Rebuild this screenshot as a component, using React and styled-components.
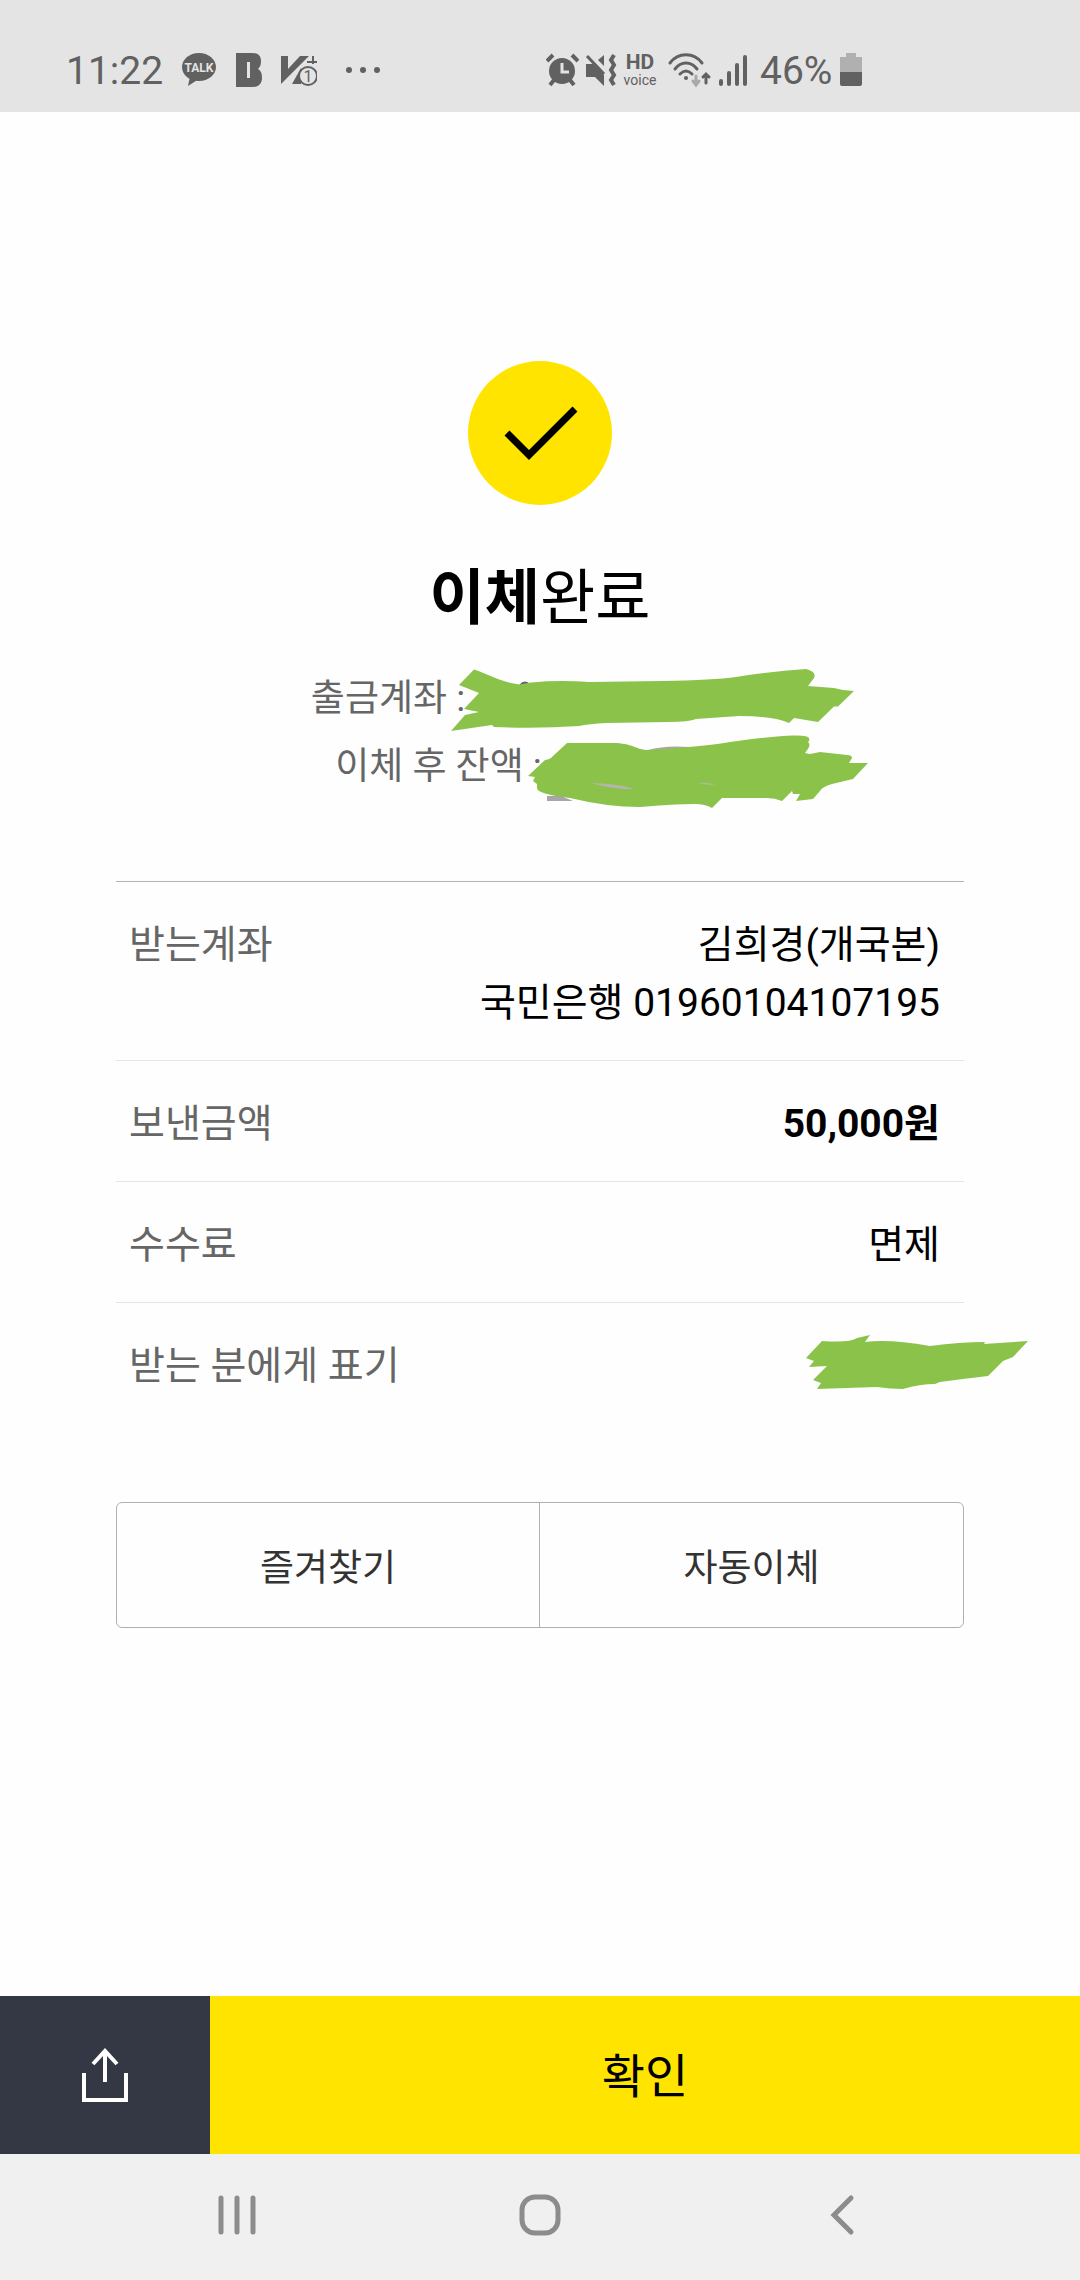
import React from 'react';
import styled, {createGlobalStyle} from "styled-components"

const receiptRows = [
    {label: "받는계좌", lines: ["김희경(개국본)", "국민은행 01960104107195"]},
    {label: "보낸금액", lines: ["50,000원"], bold: true},
    {label: "수수료", lines: ["면제"]},
    {label: "받는 분에게 표기", hidden: true}
]

function StatusIcons() {
    return (
        <StatusBar>
            <StatusGroup $gap={18}>
                <StatusText>11:22</StatusText>
                <svg width="36" height="36" viewBox="0 0 36 36" fill="#616161">
                    <path d="M18 1C8.600 1 1 7.300 1 15c0 5 3 9.200 7.500 11.700L7 34l8.200-5.300c1 .2 1.800.3 2.800.3 9.400 0 17-6.300 17-14S27.400 1 18 1z"/>
                    <text x="18" y="20" textAnchor="middle" fontFamily="Roboto, sans-serif" fontWeight="700" fontSize="12" fill="#e4e4e4">TALK</text>
                </svg>
                <svg width="28" height="36" viewBox="0 0 28 36" fill="#616161">
                    <path fillRule="evenodd" d="M1 1h16c6 0 9 3 9 8 0 4-1 6-3 8 3 2 4 4 4 9 0 6-4 9-9 9H1zM12 10v16h3V10z"/>
                </svg>
                <svg width="36" height="36" viewBox="0 0 36 36">
                    <path d="M0 4h7v13L19 4h9L0 32z" fill="#616161"/>
                    <path d="M20 16l-9 16h9z" fill="#616161"/>
                    <path d="M26 10h10M32 4v8" stroke="#616161" strokeWidth="2" fill="none"/>
                    <circle cx="27" cy="24" r="9" fill="#e4e4e4" stroke="#616161" strokeWidth="2"/>
                    <text x="27" y="30" textAnchor="middle" fontFamily="Roboto, sans-serif" fontSize="16" fill="#616161">1</text>
                </svg>
                <svg width="46" height="36" viewBox="0 0 46 36" fill="#616161">
                    <circle cx="14" cy="18" r="3"/>
                    <circle cx="28" cy="18" r="3"/>
                    <circle cx="42" cy="18" r="3"/>
                </svg>
            </StatusGroup>
            <StatusGroup $gap={6}>
                <svg width="33" height="36" viewBox="0 0 33 36" fill="none" stroke="#616161" strokeWidth="4">
                    <circle cx="16" cy="19" r="13" fill="#616161" stroke="none"/>
                    <path d="M1 9l6-6M26 3l6 6M4 33l4-5M28 33l-4-5"/>
                    <path d="M16 11v9h7" stroke="#e4e4e4" strokeWidth="3"/>
                </svg>
                <svg width="32" height="36" viewBox="0 0 32 36">
                    <path d="M1 12h7l11 11v11l-9-9H1z" fill="#616161"/>
                    <path d="M19 3v11l-6-6z" fill="#616161"/>
                    <path d="M2 4l17 18" stroke="#616161" strokeWidth="3" fill="none"/>
                    <path d="M29 3l-3 5 3 5-3 5 3 5-3 5 3 5" stroke="#616161" strokeWidth="4" fill="none"/>
                </svg>
                <HdVoice>
                    <strong>HD</strong>
                    <span>voice</span>
                </HdVoice>
                <svg width="50" height="36" viewBox="0 0 50 36" fill="none" stroke="#616161" strokeWidth="3" strokeLinecap="round">
                    <path d="M7 11C15 0 31 0 39 11M12 17c6-8 16-8 22 0M17 22c4-4 8-4 12 0"/>
                    <circle cx="23" cy="26" r="2" fill="#616161" stroke="none"/>
                    <path d="M33 24v8M30 29l3 4 3-4" stroke="#a9a9a9"/>
                    <path d="M43 31v-8M40 25l3-3 3 3"/>
                </svg>
                <svg width="28" height="36" viewBox="0 0 28 36" stroke="#616161" strokeWidth="4" strokeLinecap="round">
                    <path d="M2 29v3M10 21v11M18 13v19M26 5v27"/>
                </svg>
                <BatteryText>46%</BatteryText>
                <svg width="22" height="36" viewBox="0 0 22 36">
                    <path d="M6 1h10v4h6v15H0V5h6z" fill="#b0b0b0"/>
                    <path d="M0 20h22v12q0 2-2 2H2q-2 0-2-2z" fill="#616161"/>
                </svg>
            </StatusGroup>
        </StatusBar>
    )
}

function AccountScribble() {
    return (
        <Scribble $left={-14} width="404" height="64" viewBox="452 668 404 64">
            <path d="M522 686q4-5 8 0" stroke="#666666" strokeWidth="4" fill="none"/>
            <path fill="#8bc34a" d="M475 669.500C490 674 500 682 521 684.500L532 682.500Q560 680 590 682L663 681Q715 680 737 677Q775 671 807 669Q818 672 815 678L809 686L835 688Q845 691 855 691L839 706.500H835L819 722L795 718L790 723Q775 716 740 716L697 719Q690 722 670 722L607 723Q590 724 580 726Q537 729 495 727L493 725L452 731L466 715L480 712L465 709L480 693L460 685z"/>
        </Scribble>
    )
}

function BalanceScribble() {
    return (
        <Scribble $left={-14} width="341" height="74" viewBox="528 735 341 74">
            <path fill="#a8a5ac" d="M547 795h14l12 5h-26zM648 749Q665 744 690 746V752H648z"/>
            <path fill="#8bc34a" d="M567 742H613C632 742 637 749 648 749Q710 745 730 741Q775 735 793 734.500Q808 734 809 737Q810 740 808 741Q812 744 805 752L810 753L820 751L847 754Q852 754 852 757L849 762H868L853 778L832 783Q822 786 820 790L813 798L796 800L800 793H793L792 790L782 800Q775 797 767 797H722L712 807Q705 803 695 803Q673 803 640 806Q607 806 570 797Q537 793 537 787V783L533 780L535 776L528 775L545 759Q551 758 553 755z"/>
            <path fill="#b5b5ac" d="M591 782Q620 783 634 788Q615 789 591 782zM698 782q10-1 17 2-9 0-17-2z"/>
        </Scribble>
    )
}

function RecipientScribble() {
    return (
        <Scribble $left={-134} width="222" height="54" viewBox="806 1340 222 54">
            <path fill="#8bc34a" d="M822 1341Q850 1343 857 1338L870 1335L865 1342Q890 1339 930 1346Q960 1342 985 1342L984 1344L1028 1341L1013 1357L1003 1361L988 1376L963 1379L940 1382L935 1384Q920 1384 903 1389Q890 1389 877 1387L817 1389L821 1383L813 1380L827 1366L809 1367L814 1361L806 1358z"/>
        </Scribble>
    )
}

function App() {
    return (
        <>
            <GlobalStyle/>
            <Page>
                <StatusIcons/>
                <Content>
                    <CheckCircle>
                        <svg width="76" height="56" viewBox="0 0 76 56" fill="none" stroke="#000000" strokeWidth="7">
                            <path d="M5 28l22 22 46-46"/>
                        </svg>
                    </CheckCircle>
                    <Title><strong>이체</strong>완료</Title>
                    <Summary>
                        <SummaryLine>
                            출금계좌 :
                            <HiddenValue $width={304}><AccountScribble/></HiddenValue>
                        </SummaryLine>
                        <SummaryLine>
                            이체 후 잔액 :
                            <HiddenValue $width={203}><BalanceScribble/></HiddenValue>
                        </SummaryLine>
                    </Summary>
                    <Receipt>
                        {receiptRows.map((row) => (
                            <Row key={row.label}>
                                <dt>{row.label}</dt>
                                <Value $bold={row.bold}>
                                    {row.hidden
                                        ? <HiddenValue $width={0}><RecipientScribble/></HiddenValue>
                                        : row.lines.map((line) => <div key={line}>{line}</div>)}
                                </Value>
                            </Row>
                        ))}
                    </Receipt>
                    <ButtonPair>
                        <button type="button">즐겨찾기</button>
                        <button type="button">자동이체</button>
                    </ButtonPair>
                </Content>
                <ActionBar>
                    <ShareButton type="button" aria-label="공유">
                        <svg width="48" height="56" viewBox="0 0 48 56" fill="none" stroke="#ffffff" strokeWidth="4">
                            <path d="M3 26v27h42V26M24 4v31M12 17L24 4l12 13"/>
                        </svg>
                    </ShareButton>
                    <ConfirmButton type="button">확인</ConfirmButton>
                </ActionBar>
                <NavBar>
                    <button type="button" aria-label="최근 앱">
                        <svg width="42" height="42" viewBox="0 0 42 42" stroke="#8c8c8c" strokeWidth="5" strokeLinecap="round">
                            <path d="M5 4v34M21 4v34M37 4v34"/>
                        </svg>
                    </button>
                    <button type="button" aria-label="홈">
                        <svg width="42" height="42" viewBox="0 0 42 42" fill="none" stroke="#8c8c8c" strokeWidth="5">
                            <rect x="3" y="3" width="36" height="36" rx="13"/>
                        </svg>
                    </button>
                    <button type="button" aria-label="뒤로">
                        <svg width="42" height="42" viewBox="0 0 42 42" fill="none" stroke="#8c8c8c" strokeWidth="5" strokeLinecap="round">
                            <path d="M29 4L12 21l17 17"/>
                        </svg>
                    </button>
                </NavBar>
            </Page>
        </>
    );
}

export default App;

const GlobalStyle = createGlobalStyle`
  *{
    box-sizing: border-box;
  }
  body{
    margin: 0;
    font-family: Roboto, "Noto Sans CJK KR", sans-serif;
    background-color: #fefefe;
  }
  button{
    font-family: inherit;
    border: none;
    background: none;
    padding: 0;
    cursor: pointer;
  }
  svg{
    display: block;
    flex-shrink: 0;
  }
`;

const Page = styled.div`
  min-height: 100vh;
  display: flex;
  flex-direction: column;
`;

const StatusBar = styled.header`
  height: 112px;
  padding: 27px 54px 0 66px;
  display: grid;
  grid-template-columns: 1fr 1fr;
  align-items: center;
  background-color: #e4e4e4;
  color: #616161;
`;

const StatusGroup = styled.div`
  display: flex;
  align-items: center;
  gap: ${({$gap}) => $gap}px;
`;

const StatusText = styled.span`
  padding-top: 2px;
  font-size: 39px;
  line-height: 40px;
`;

const BatteryText = styled(StatusText)`
  padding-left: 7px;
  padding-right: 2px;
`;

const HdVoice = styled.span`
  width: 34px;
  display: flex;
  flex-direction: column;
  align-items: center;
  font-size: 14px;
  line-height: 16px;
  strong{
    font-size: 21px;
    line-height: 20px;
  }
`;

const Content = styled.main`
  flex: 1;
  padding: 249px 116px 80px;
  display: flex;
  flex-direction: column;
  align-items: center;
`;

const CheckCircle = styled.div`
  width: 144px;
  height: 144px;
  border-radius: 50%;
  display: flex;
  align-items: center;
  justify-content: center;
  background-color: #ffe400;
`;

const Title = styled.h1`
  margin: 54px 0 26px;
  font-size: 60px;
  line-height: 80px;
  font-weight: 400;
  color: #000000;
`;

const Summary = styled.div`
  font-size: 37px;
  line-height: 68px;
  color: #666666;
`;

const SummaryLine = styled.div`
  display: flex;
  justify-content: center;
  white-space: nowrap;
`;

const HiddenValue = styled.span`
  position: relative;
  display: block;
  width: ${({$width}) => $width}px;
`;

const Scribble = styled.svg`
  position: absolute;
  top: 3px;
  left: ${({$left}) => $left}px;
  overflow: visible;
`;

const Receipt = styled.dl`
  align-self: stretch;
  margin: 80px 0 79px;
  border-top: 1px solid #b3b3b3;
  font-size: 39px;
  line-height: 58px;
`;

const Row = styled.div`
  display: flex;
  justify-content: space-between;
  padding: 34px 24px 28px 13px;
  color: #666666;
  &:not(:last-child){
    border-bottom: 1px solid #e5e5e5;
  }
`;

const Value = styled.dd`
  margin: 0;
  text-align: right;
  font-weight: ${({$bold}) => $bold ? 700 : 400};
  color: #000000;
`;

const ButtonPair = styled.div`
  align-self: stretch;
  display: grid;
  grid-template-columns: 1fr 1fr;
  border: 1px solid #b0b0b0;
  border-radius: 6px;
  button{
    height: 124px;
    font-size: 37px;
    color: #333333;
  }
  button:first-child{
    border-right: 1px solid #b0b0b0;
  }
`;

const ActionBar = styled.div`
  height: 158px;
  display: flex;
`;

const ShareButton = styled.button`
  width: 210px;
  display: flex;
  align-items: center;
  justify-content: center;
  background-color: #343844;
`;

const ConfirmButton = styled.button`
  flex: 1;
  padding-bottom: 6px;
  font-size: 47px;
  color: #000000;
  background-color: #ffe400;
`;

const NavBar = styled.nav`
  height: 126px;
  padding: 0 86px 4px;
  display: grid;
  grid-template-columns: repeat(3, 1fr);
  background-color: #f0f0f0;
  button{
    display: flex;
    align-items: center;
    justify-content: center;
  }
`;
